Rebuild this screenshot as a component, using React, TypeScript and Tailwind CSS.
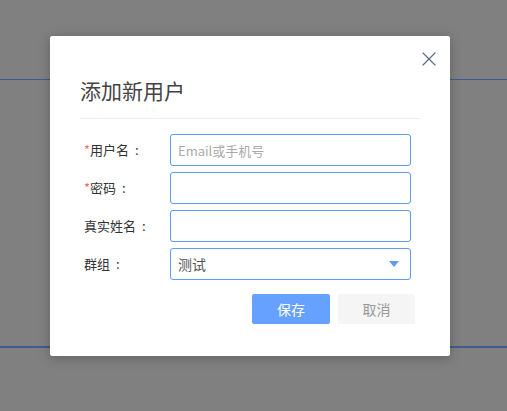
import { X } from "lucide-react";

// Диалог «添加新用户» поверх затемнённой страницы.

const FONT = { fontFamily: '"Microsoft YaHei", "Noto Sans CJK SC", "Noto Sans", sans-serif' };

type Field = { label: string; required?: boolean; placeholder?: string };

const FIELDS: Field[] = [
  { label: "用户名", required: true, placeholder: "Email或手机号" },
  { label: "密码", required: true },
  { label: "真实姓名" },
];

function Row({ label, required, children }: { label: string; required?: boolean; children: React.ReactNode }) {
  return (
    <div className="flex h-[32px] items-center">
      <label className="flex w-[90px] items-center pl-[4px] text-[13px] text-[#333]">
        {required && <span className="text-[#f56c6c]">*</span>}
        {label}
        <span className="ml-[6px]">:</span>
      </label>
      {children}
    </div>
  );
}

export default function App() {
  return (
    <div className="relative h-[411px] w-[507px] overflow-hidden bg-[#808080]" style={FONT}>
      {/* страница под оверлеем */}
      <div className="flex flex-col">
        <div className="h-[79px]" />
        <div className="h-px bg-[#3e5c92]" />
        <div className="h-[266px]" />
        <div className="h-[2px] bg-[#3e5c92]" />
      </div>

      <div className="absolute left-[50px] top-[36px] flex h-[320px] w-[400px] flex-col rounded-[2px] bg-white px-[30px] shadow-[0_2px_12px_rgba(0,0,0,0.25)]">
        <button type="button" className="absolute right-[9px] top-[11px] text-[#5e6d85]">
          <X size={24} strokeWidth={1.2} />
        </button>

        <h3 className="pt-[42px] text-[21px] leading-[24px] text-[#444]">添加新用户</h3>
        <div className="mt-[16px] h-px bg-[#eeeeee]" />

        <div className="mt-[15px] flex flex-col gap-[6px]">
          {FIELDS.map((f) => (
            <Row key={f.label} label={f.label} required={f.required}>
              <input
                placeholder={f.placeholder}
                className="h-[32px] w-[241px] rounded-[3px] border border-[#5c9bf7] px-[7px] text-[13px] text-[#333] outline-none placeholder:text-[#aaa]"
              />
            </Row>
          ))}
          <Row label="群组">
            <div className="flex h-[32px] w-[241px] items-center justify-between rounded-[3px] border border-[#5c9bf7] pl-[7px] pr-[11px] text-[14px] text-[#555]">
              <span>测试</span>
              <svg width="10" height="6" viewBox="0 0 10 6">
                <path d="M0 0h10L5 6z" fill="#5c9bf7" />
              </svg>
            </div>
          </Row>
        </div>

        <div className="mt-[14px] flex justify-end gap-[8px] pr-[5px]">
          <button type="button" className="h-[30px] w-[78px] rounded-[2px] bg-[#66a1ff] text-[14px] text-white">
            保存
          </button>
          <button type="button" className="h-[30px] w-[77px] rounded-[2px] bg-[#f5f5f5] text-[14px] text-[#999]">
            取消
          </button>
        </div>
      </div>
    </div>
  );
}
